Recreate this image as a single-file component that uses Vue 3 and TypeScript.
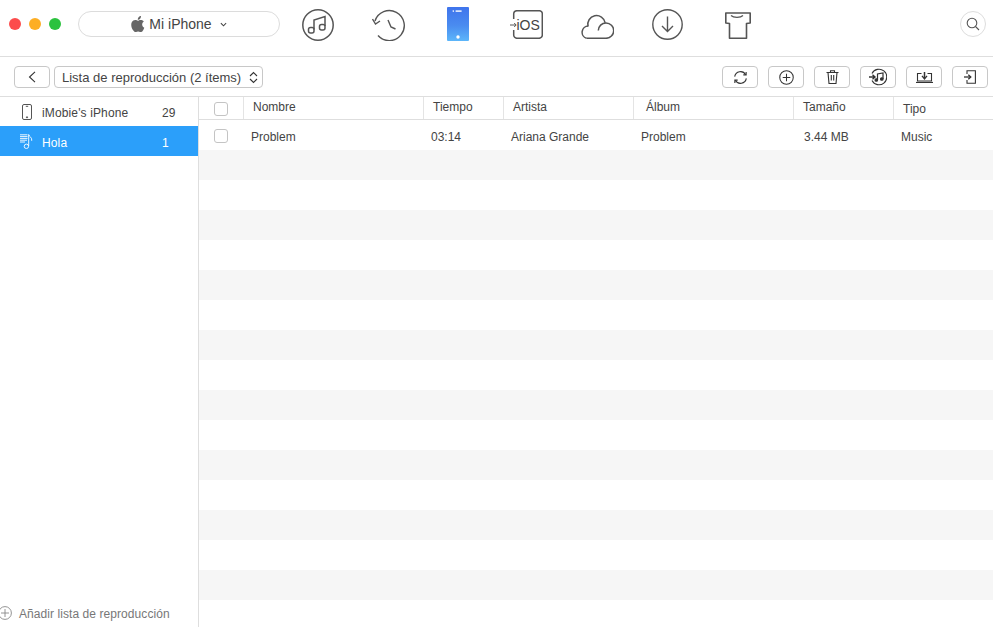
<script setup lang="ts">
interface Col { label: string; cls: string; value: string }
const cols: Col[] = [
  { label: 'Nombre', cls: 'c-name', value: 'Problem' },
  { label: 'Tiempo', cls: 'c-time', value: '03:14' },
  { label: 'Artista', cls: 'c-artist', value: 'Ariana Grande' },
  { label: 'Álbum', cls: 'c-album', value: 'Problem' },
  { label: 'Tamaño', cls: 'c-size', value: '3.44 MB' },
  { label: 'Tipo', cls: 'c-type', value: 'Music' },
]
const emptyRows = Array.from({ length: 16 }, (_, i) => i)
</script>

<template>
  <div class="app">
    <header class="topbar">
      <div class="lights">
        <span class="light red"></span>
        <span class="light amber"></span>
        <span class="light green"></span>
      </div>
      <div class="device">
        <svg class="apple" viewBox="3.500 1.500 16.500 20.500" width="14" height="16"><path fill="#666" d="M17.05 12.54c-.03-2.6 2.12-3.85 2.22-3.91-1.21-1.77-3.09-2.01-3.76-2.04-1.6-.16-3.12.94-3.93.94-.81 0-2.06-.92-3.39-.89-1.74.03-3.35 1.01-4.25 2.57-1.81 3.14-.46 7.8 1.3 10.35.86 1.25 1.89 2.65 3.24 2.6 1.3-.05 1.79-.84 3.36-.84 1.57 0 2.01.84 3.39.81 1.4-.02 2.28-1.27 3.14-2.53.99-1.45 1.4-2.85 1.42-2.93-.03-.01-2.71-1.04-2.74-4.13zM14.47 4.9c.72-.87 1.2-2.08 1.07-3.28-1.03.04-2.28.69-3.02 1.55-.66.77-1.24 2-1.09 3.18 1.15.09 2.33-.58 3.04-1.45z"/></svg>
        <span class="device-name">Mi iPhone</span>
        <svg class="chev" viewBox="0 0 8 5" width="7" height="5"><path d="M1 1l3 3 3-3" fill="none" stroke="#444" stroke-width="1.2"/></svg>
      </div>
      <nav class="nav">
        <svg class="nav-icon n-music" viewBox="0 0 32 32" width="32" height="32" fill="none" stroke="#555" stroke-width="1.5">
          <circle cx="16" cy="16" r="15.2"/>
          <path d="M12 20.500V11l11-3.500V17"/>
          <rect x="6.500" y="18.500" width="5.500" height="5.500" rx="2"/>
          <rect x="17.500" y="15.500" width="5.500" height="5.500" rx="2"/>
        </svg>
        <svg class="nav-icon n-history" viewBox="0 0 34 32" width="34" height="32" fill="none" stroke="#555" stroke-width="1.4">
          <path d="M3 12A15 15 0 1 1 6 26.500"/>
          <path d="M.5 10l3 5 4.500-3"/>
          <path d="M16 11l3 7 4.500 2"/>
        </svg>
        <svg class="nav-icon n-phone" viewBox="0 0 22 34" width="22" height="34">
          <defs>
            <linearGradient id="phoneFill" x1="0" y1="0" x2="0" y2="1">
              <stop offset="0" stop-color="#3f74ec"/>
              <stop offset="0.55" stop-color="#4a8cf0"/>
              <stop offset="1" stop-color="#5cb6fa"/>
            </linearGradient>
          </defs>
          <rect width="22" height="34" rx="1" fill="url(#phoneFill)"/>
          <rect x="8.600" y="3.400" width="6" height="1.400" fill="#fff"/>
          <circle cx="6.300" cy="4.100" r="0.800" fill="#fff"/>
          <circle cx="11" cy="30" r="1.700" fill="#fff"/>
        </svg>
        <div class="nav-ios">
          <svg class="ios-frame" viewBox="0 0 33 29" width="33" height="29" fill="none" stroke="#555" stroke-width="1.500">
            <path d="M3.700 9V4a3.300 3.300 0 0 1 3.300-3.300h22.500A3 3 0 0 1 32.300 4v21a3.300 3.300 0 0 1-3.300 3.300H7A3.300 3.300 0 0 1 3.700 25v-5"/>
            <path d="M0 15h6M4.200 13l2 2-2 2" stroke-width="1"/>
          </svg>
          <span class="ios-text">iOS</span>
        </div>
        <svg class="nav-icon n-cloud" viewBox="0 0 34 27" width="34" height="27" fill="none" stroke="#555" stroke-width="1.500">
          <path d="M6.500 26.300H26A7.700 7.700 0 1 0 18.300 18.500"/>
          <path d="M6.500 26.300A6.300 6.300 0 0 1 8.300 14"/>
          <path d="M8 14.500A8.800 8.800 0 1 1 25.200 10.800"/>
        </svg>
        <svg class="nav-icon n-down" viewBox="0 0 31 31" width="31" height="31" fill="none" stroke="#555" stroke-width="1.400">
          <circle cx="15.500" cy="15.500" r="14.700"/>
          <path d="M15.500 7.500v15M10 17l5.500 5.500L21 17"/>
        </svg>
        <svg class="nav-icon n-shirt" viewBox="0 0 26 27" width="26" height="27" fill="none" stroke="#555" stroke-width="1.600" stroke-linejoin="round">
          <path d="M.8 1H25.200V11L21.500 11.500V26.200H4.500V11.500L.8 11z"/>
          <path d="M6 3.500c2.500 2.500 9.500 2.500 12 0" stroke-width="1.200"/>
        </svg>
      </nav>
      <button class="search" aria-label="Buscar">
        <svg viewBox="0 0 14 14" width="14" height="14" fill="none" stroke="#555" stroke-width="1.100">
          <circle cx="6" cy="6" r="4.800"/>
          <path d="M9.500 9.500L13 13"/>
        </svg>
      </button>
    </header>

    <div class="toolbar">
      <button class="tbtn back" aria-label="Atrás">
        <svg viewBox="0 0 8 12" width="8" height="12" fill="none" stroke="#333" stroke-width="1.100"><path d="M7 .8L1.500 6 7 11.200"/></svg>
      </button>
      <div class="select">
        <span>Lista de reproducción (2 ítems)</span>
        <svg viewBox="0 0 9 13" width="9" height="13" fill="none" stroke="#333" stroke-width="1.100"><path d="M1 5l3.500-3.500L8 5M1 8l3.500 3.500L8 8"/></svg>
      </div>
      <div class="actions">
        <button class="tbtn act" aria-label="Actualizar">
          <svg viewBox="0 0 16 16" width="15" height="15" fill="none" stroke="#333" stroke-width="1.200">
            <path d="M1.800 7A6.300 6.300 0 0 1 13.500 5"/><path d="M14.200 9A6.300 6.300 0 0 1 2.500 11"/>
            <path d="M11 5.200h3V2.200M5 10.800H2v3"/>
          </svg>
        </button>
        <button class="tbtn act" aria-label="Añadir">
          <svg viewBox="0 0 16 16" width="15" height="15" fill="none" stroke="#333" stroke-width="1.100">
            <circle cx="8" cy="8" r="7.200"/><path d="M8 4v8M4 8h8"/>
          </svg>
        </button>
        <button class="tbtn act" aria-label="Eliminar">
          <svg viewBox="0 0 13 14" width="13" height="14" fill="none" stroke="#333" stroke-width="1.100">
            <path d="M.5 2.500h12M4.500 2.500V.8h4v1.700M2 2.500l1 11h7l1-11M5.300 5v5.500M7.700 5v5.500"/>
          </svg>
        </button>
        <button class="tbtn act" aria-label="A iTunes">
          <svg viewBox="0 0 18 18" width="18" height="18" fill="none" stroke="#333" stroke-width="1.100">
            <path d="M3 5.500A7.800 7.800 0 1 1 3 12.500"/>
            <path d="M0 9h5.500M3.500 6.800L6 9l-2.500 2.200" stroke-width="1.400"/>
            <path d="M8.500 12V6l5.500-1v6" stroke-width="1.200"/>
            <circle cx="7.300" cy="12" r="1.300" fill="#333"/><circle cx="12.800" cy="11" r="1.300" fill="#333"/>
          </svg>
        </button>
        <button class="tbtn act" aria-label="Importar">
          <svg viewBox="0 0 17 11" width="17" height="11" fill="none" stroke="#333" stroke-width="1.100">
            <path d="M5.500 1.500H1.500v7.500h14V1.500H11.500"/><path d="M0 10.500h17" stroke-width="1.200"/>
            <path d="M8.500 0v6" stroke-width="1.500"/><path d="M6 3.800L8.500 7 11 3.800" stroke-width="1.300"/>
          </svg>
        </button>
        <button class="tbtn act last" aria-label="Exportar">
          <svg viewBox="0 0 12 14" width="12" height="14" fill="none" stroke="#333" stroke-width="1.100">
            <path d="M3 4V.8h8.400v12.400H3V10"/><path d="M0 7h6.500" stroke-width="1.300"/><path d="M4.300 4.700L6.800 7l-2.500 2.300" stroke-width="1.300"/>
          </svg>
        </button>
      </div>
    </div>

    <div class="body">
      <aside class="sidebar">
        <div class="side-row">
          <span class="icon-slot">
            <svg viewBox="0 0 10 16" width="10" height="16" fill="none" stroke="#555" stroke-width="1">
              <rect x=".5" y=".5" width="9" height="15" rx="1.500"/>
              <path d="M3.800 2.300h2.400"/><circle cx="5" cy="13.300" r=".6" fill="#555"/>
            </svg>
          </span>
          <span class="side-label">iMobie's iPhone</span>
          <span class="side-count">29</span>
        </div>
        <div class="side-row active">
          <span class="icon-slot">
            <svg viewBox="0 0 13 15" width="13" height="15" fill="none" stroke="#fff" stroke-width=".9">
              <path d="M0 .8h7.500M0 2.600h7.500M0 4.400h7.500M0 6.200h7M0 8h5"/>
              <path d="M8.700 .3v11.700"/><path d="M8.700 .8c.4 1.800 3.700 2.600 3 6"/>
              <circle cx="6.400" cy="12.300" r="2.200"/>
            </svg>
          </span>
          <span class="side-label">Hola</span>
          <span class="side-count">1</span>
        </div>
        <div class="add-row">
          <svg viewBox="0 0 14 14" width="14" height="14" fill="none" stroke="#888" stroke-width=".9">
            <circle cx="7" cy="7" r="6.400"/><path d="M7 3v8M3 7h8"/>
          </svg>
          <span>Añadir lista de reproducción</span>
        </div>
      </aside>

      <main class="list">
        <div class="thead">
          <div class="cell-check head-check"><span class="check"></span></div>
          <div v-for="c in cols" :key="c.label" class="th" :class="c.cls">{{ c.label }}</div>
        </div>
        <div class="tbody">
          <div class="tr">
            <div class="cell-check row-check"><span class="check"></span></div>
            <div v-for="c in cols" :key="c.label" class="td" :class="c.cls">{{ c.value }}</div>
          </div>
          <div v-for="i in emptyRows" :key="i" class="tr" :class="{ alt: i % 2 === 0 }"></div>
        </div>
      </main>
    </div>
  </div>
</template>

<style>
html, body { margin: 0; background: #fff; }
</style>

<style scoped>
.app {
  width: 993px;
  height: 627px;
  overflow: hidden;
  display: flex;
  flex-direction: column;
  font-family: "Liberation Sans", Arial, sans-serif;
  font-size: 12px;
  color: #333;
  background: #fff;
}
button { padding: 0; font: inherit; background: #fff; }

.topbar {
  height: 56px;
  flex: none;
  display: flex;
  align-items: center;
  border-bottom: 1px solid #dedede;
  position: relative;
}
.lights { display: flex; gap: 8px; margin-left: 9px; margin-top: -8px; }
.light { width: 12px; height: 12px; border-radius: 50%; }
.red { background: #fc4c4c; }
.amber { background: #fdae24; }
.green { background: #2bc23e; }
.device {
  margin-left: 17px;
  margin-top: -8px;
  width: 200px;
  height: 24px;
  border: 1px solid #dcdcdc;
  border-radius: 13px;
  display: flex;
  align-items: center;
  justify-content: center;
  box-sizing: content-box;
}
.apple { margin-right: 4px; margin-top: -1px; }
.device-name { font-size: 14px; color: #444; margin-right: 8px; }
.nav { display: flex; align-items: center; margin-left: 22px; margin-top: -6px; }
.nav-icon { display: block; flex: none; }
.n-history { margin-left: 38px; }
.n-phone { margin-left: 41px; margin-top: -2px; }
.nav-ios { position: relative; margin-left: 41px; margin-top: -2px; width: 33px; height: 29px; }
.ios-frame { display: block; }
.ios-text {
  position: absolute;
  left: 6.5px;
  top: 6px;
  font-size: 14px;
  line-height: 18px;
  color: #444;
}
.n-cloud { margin-left: 37px; }
.n-down { margin-left: 38px; margin-top: -1px; }
.n-shirt { margin-left: 42px; }
.search {
  position: absolute;
  right: 7px;
  top: 11px;
  width: 26px;
  height: 26px;
  border: 1px solid #ddd;
  border-radius: 50%;
  display: flex;
  align-items: center;
  justify-content: center;
}

.toolbar {
  height: 38px;
  padding-top: 1px;
  flex: none;
  display: flex;
  align-items: center;
  border-bottom: 1px solid #dedede;
  padding-left: 14px;
}
.tbtn {
  height: 22px;
  width: 36px;
  box-sizing: border-box;
  border: 1px solid #c8c8c8;
  border-radius: 4px;
  display: flex;
  align-items: center;
  justify-content: center;
}
.select {
  margin-left: 4px;
  width: 209px;
  height: 22px;
  box-sizing: border-box;
  border: 1px solid #c8c8c8;
  border-radius: 4px;
  display: flex;
  align-items: center;
  justify-content: space-between;
  padding: 0 4px 0 7px;
  font-size: 13px;
  color: #444;
}
.actions { margin-left: auto; margin-right: 5px; display: flex; gap: 10px; }

.body { flex: 1; display: flex; min-height: 0; }
.sidebar {
  width: 198px;
  flex: none;
  border-right: 1px solid #dedede;
  display: flex;
  flex-direction: column;
}
.side-row {
  height: 30px;
  display: flex;
  align-items: center;
  color: #444;
  padding-left: 20px;
}
.side-row:first-child { height: 29px; }
.side-row.active { background: #2b9ffa; color: #fff; }
.icon-slot {
  width: 13px;
  flex: none;
  display: flex;
  justify-content: center;
}
.side-label {
  margin-left: 9px;
  flex: 1;
  padding-top: 2px;
  letter-spacing: .13px;
}
.side-count { width: 36px; padding-top: 2px; }
.active .side-label,
.active .side-count { padding-top: 4px; }
.add-row {
  margin-top: auto;
  height: 28px;
  display: flex;
  align-items: center;
  gap: 7px;
  margin-left: -2px;
  color: #777;
  letter-spacing: .07px;
}
.add-row span { padding-top: 2px; }

.list { flex: 1; min-width: 0; }
.thead {
  height: 22px;
  display: flex;
  border-bottom: 1px solid #dedede;
}
.th {
  box-sizing: border-box;
  border-left: 1px solid #e4e4e4;
  line-height: 20px;
  color: #444;
}
.td { box-sizing: border-box; line-height: 30px; padding-top: 2px; color: #444; }
.cell-check {
  width: 44px;
  flex: none;
  display: flex;
  align-items: center;
  justify-content: center;
}
.head-check { padding-top: 2px; box-sizing: border-box; }
.row-check { padding-top: 2px; box-sizing: border-box; }
.check {
  width: 14px;
  height: 14px;
  box-sizing: border-box;
  border: 1px solid #c4c4c4;
  border-radius: 3px;
  background: #fff;
}
.c-name { width: 180px; }
.c-time { width: 80px; }
.c-artist { width: 130px; }
.c-album { width: 160px; }
.c-size { width: 100px; }
.c-type { width: 100px; }
.th.c-name { padding-left: 9px; }
.th.c-time { padding-left: 9px; }
.th.c-artist { padding-left: 9px; }
.th.c-album { padding-left: 12px; }
.th.c-size { padding-left: 9px; }
.th.c-type { padding-left: 9px; line-height: 24px; }
.td.c-name { padding-left: 8px; }
.td.c-time { padding-left: 8px; }
.td.c-artist { padding-left: 8px; }
.td.c-album { padding-left: 8px; }
.td.c-size { padding-left: 11px; }
.td.c-type { padding-left: 8px; }
.tr { height: 30px; display: flex; }
.tr.alt { background: #f6f6f6; }
</style>
